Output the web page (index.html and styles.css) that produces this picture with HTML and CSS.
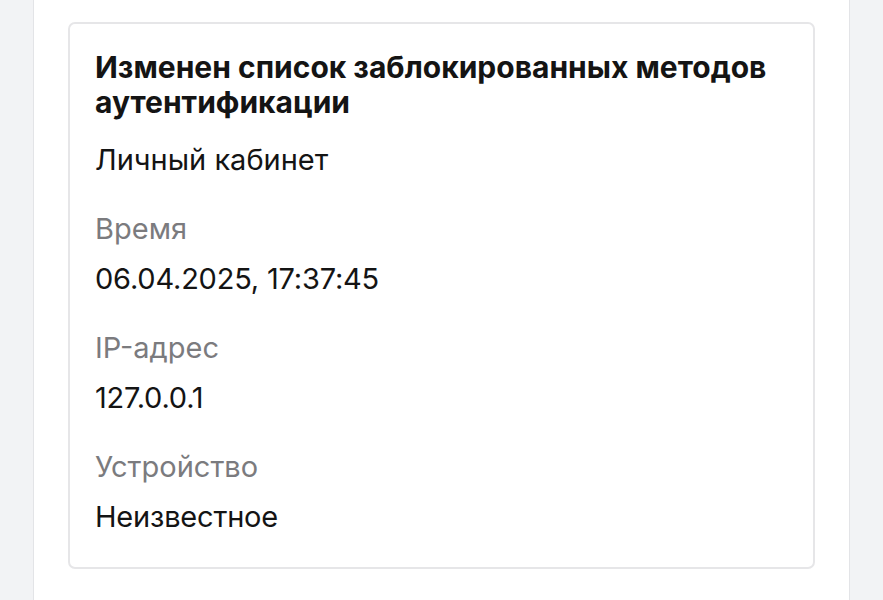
FILE: index.html
```html
<!DOCTYPE html>
<html lang="ru">
<head>
<meta charset="utf-8">
<link rel="stylesheet" href="styles.css">
</head>
<body>
<div class="panel">
  <div class="card">
    <h1 class="title">Изменен список заблокированных методов аутентификации</h1>
    <div class="source">Личный кабинет</div>
    <div class="field">
      <div class="label">Время</div>
      <div class="value">06.04.2025, 17:37:45</div>
    </div>
    <div class="field">
      <div class="label">IP-адрес</div>
      <div class="value">127.0.0.1</div>
    </div>
    <div class="field">
      <div class="label">Устройство</div>
      <div class="value">Неизвестное</div>
    </div>
  </div>
</div>
</body>
</html>
```
FILE: styles.css
```css
html, body {
  margin: 0;
  padding: 0;
  background: #f2f3f5;
  font-family: Inter, "Noto Sans", sans-serif;
  color: #141414;
}
.panel {
  width: 817px;
  margin: 0 0 0 33px;
  min-height: 600px;
  background: #ffffff;
  border-left: 1px solid #e3e4e7;
  border-right: 1px solid #e3e4e7;
  padding: 22px 34px 0;
  box-sizing: border-box;
}
.card {
  border: 2px solid #e6e6e8;
  border-radius: 7px;
  padding: 26px 26px 32px 25px;
}
.title {
  margin: 0;
  font-size: 30px;
  line-height: 35px;
  font-weight: 700;
}
.source {
  margin-top: 22px;
  font-size: 29px;
  line-height: 36px;
}
.field {
  margin-top: 33px;
  display: flex;
  flex-direction: column;
  gap: 14px;
}
.label {
  font-size: 29px;
  line-height: 36px;
  color: #7b7b7e;
}
.value {
  font-size: 29px;
  line-height: 36px;
  letter-spacing: -0.2px;
}
```
